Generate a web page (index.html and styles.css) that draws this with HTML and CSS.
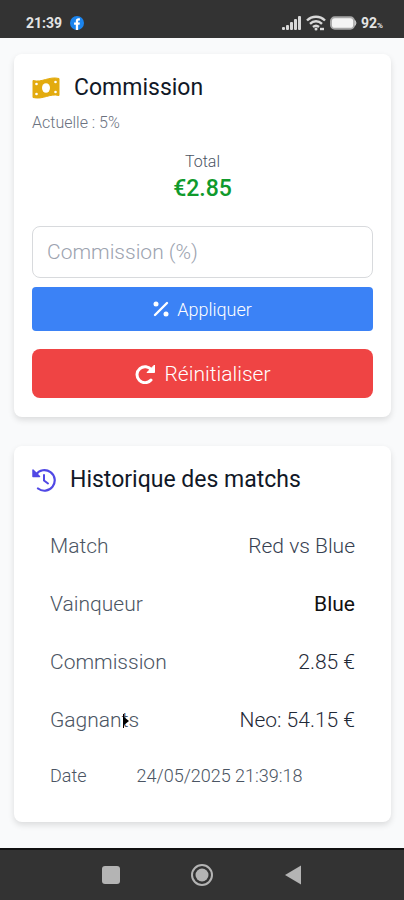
FILE: index.html
```html
<!DOCTYPE html>
<html lang="fr">

<head>
    <meta charset="UTF-8">
    <meta name="viewport" content="width=device-width, initial-scale=1.0">
    <title>Commission</title>
    <link rel="stylesheet" href="styles.css">
</head>

<body>
    <!-- Barre d'état -->
    <header class="status-bar">
        <div class="status-left">
            <span>21:39</span>
            <svg class="facebook" viewBox="0 0 24 24">
                <circle cx="12" cy="12" r="12" fill="#1b84ee" />
                <path d="M10 24v-9H7v-4h3V8.500C10 5.500 11.800 4 14.500 4H17v3.500h-1.600c-1.200 0-1.500.7-1.500 1.600V11H17l-.6 4h-2.500v9z" fill="#fff" />
            </svg>
        </div>
        <div class="status-right">
            <svg class="signal" viewBox="0 0 20 14" fill="#d8d8d8">
                <rect x="0" y="11" width="3" height="3" rx="1" />
                <rect x="4" y="9" width="3" height="5" rx="1" />
                <rect x="8" y="6" width="3" height="8" rx="1" />
                <rect x="12" y="3" width="3" height="11" rx="1" />
                <rect x="16" y="0" width="3" height="14" rx="1" />
            </svg>
            <svg class="wifi" viewBox="0 0 20 16" fill="none" stroke="#d8d8d8" stroke-width="2.400">
                <path d="M1 5.500C6 .5 14 .5 19 5.500" />
                <path d="M4 8.800c3.500-3.400 8.500-3.400 12 0" />
                <path d="M7 12c2-1.800 4-1.800 6 0" />
                <circle cx="10" cy="14" r="1.500" fill="#d8d8d8" stroke="none" />
                <path d="M14 14h4" />
            </svg>
            <svg class="battery" viewBox="0 0 28 14">
                <rect x="1" y="1" width="24" height="12" rx="4" fill="#f4f4f4" stroke="#a8a8a8" stroke-width="2" />
                <path d="M26 4.500q2 2.500 0 5z" fill="#c8c8c8" stroke="#c8c8c8" />
            </svg>
            <span>92<small>%</small></span>
        </div>
    </header>

    <main class="content">
        <!-- Commission -->
        <section class="card">
            <h2 class="card-title">
                <svg class="icon-money" viewBox="0 0 28 22">
                    <path d="M1 3.500C10 6 17-1 27 1.500V18.500C18 16 11 23 1 20.500Z" fill="#e3ab0e" stroke="#e3ab0e" stroke-linejoin="round" />
                    <ellipse cx="14" cy="11" rx="4" ry="4.800" fill="#fff" />
                    <g fill="#fff">
                        <circle cx="4.500" cy="7" r="1.300" />
                        <circle cx="4.500" cy="17" r="1.300" />
                        <circle cx="23.500" cy="5" r="1.300" />
                        <circle cx="23.500" cy="15" r="1.300" />
                    </g>
                </svg>
                Commission
            </h2>
            <p class="current">Actuelle : 5%</p>
            <div class="total">
                <p class="total-label">Total</p>
                <p class="total-value">€2.85</p>
            </div>
            <form class="commission-form">
                <input type="text" class="commission-input" aria-label="Commission (%)" placeholder="Commission (%)">
                <button type="button" class="btn btn-apply">
                    <svg class="icon-percent" viewBox="0 0 16 16">
                        <path d="M2 14 14 2" stroke="#fff" stroke-width="2.400" stroke-linecap="round" />
                        <circle cx="3" cy="3" r="2.500" fill="#fff" />
                        <circle cx="13" cy="13" r="2.500" fill="#fff" />
                    </svg>
                    Appliquer
                </button>
                <button type="button" class="btn btn-reset">
                    <svg class="icon-reset" viewBox="0 0 20 20">
                        <path d="M16.500 6A8 8 0 1 0 16 16" fill="none" stroke="#fff" stroke-width="3" stroke-linecap="round" />
                        <path d="M19.500 1v7.500H12z" fill="#fff" stroke="#fff" stroke-linejoin="round" />
                    </svg>
                    Réinitialiser
                </button>
            </form>
        </section>

        <!-- Historique -->
        <section class="card">
            <h2 class="card-title">
                <svg class="icon-history" viewBox="0 0 24 24" fill="none" stroke="#5048e5" stroke-width="2.200">
                    <path d="M4 6.500A10.300 10.300 0 1 1 6 20.500" stroke-linecap="round" />
                    <path d="M1 2v6.500h6.500z" fill="#5048e5" stroke-width="1.500" stroke-linejoin="round" />
                    <path d="M12 7v5.500l4 3" stroke-width="2" stroke-linecap="round" />
                </svg>
                Historique des matchs
            </h2>
            <table class="history">
                <tbody>
                    <tr>
                        <th scope="row">Match</th>
                        <td>Red vs Blue</td>
                    </tr>
                    <tr>
                        <th scope="row">Vainqueur</th>
                        <td class="winner">Blue</td>
                    </tr>
                    <tr>
                        <th scope="row">Commission</th>
                        <td class="amount">2.85 €</td>
                    </tr>
                    <tr>
                        <th scope="row">
                            <span class="gagnants">Gagnants
                                <svg class="pointer" viewBox="0 0 6 14"><path d="M0 0h1v3l5 4-5 4v3H0z" /></svg>
                            </span>
                        </th>
                        <td class="amount">Neo: 54.15 €</td>
                    </tr>
                    <tr class="date-row">
                        <th scope="row">Date</th>
                        <td>24/05/2025 21:39:18</td>
                    </tr>
                </tbody>
            </table>
        </section>
    </main>

    <!-- Barre de navigation -->
    <nav class="nav-bar">
        <button type="button" aria-label="Applications récentes">
            <svg viewBox="0 0 24 24"><rect x="3" y="3" width="18" height="18" rx="3" fill="#b4b4b4" /></svg>
        </button>
        <button type="button" aria-label="Accueil">
            <svg viewBox="0 0 24 24">
                <circle cx="12" cy="12" r="10" fill="none" stroke="#b4b4b4" stroke-width="2" />
                <circle cx="12" cy="12" r="6.500" fill="#b4b4b4" />
            </svg>
        </button>
        <button type="button" aria-label="Retour">
            <svg viewBox="0 0 24 24"><path d="M4 12 20 2.500v19z" fill="#b4b4b4" /></svg>
        </button>
    </nav>
</body>

</html>
```

FILE: styles.css
```css
/* Reset styling */
* {
    margin: 0;
    padding: 0;
    box-sizing: border-box;
    font-family: Roboto, "Noto Sans", sans-serif;
}

/* Body styling */
body {
    min-height: 100vh;
    display: flex;
    flex-direction: column;
    background-color: #f9fafb;
    color: #111827;
}

svg {
    flex: none;
}

/* Status bar */
.status-bar {
    display: flex;
    justify-content: space-between;
    height: 38px;
    padding: 8px 21px 0 26px;
    background-color: #333;
    color: #e4e4e4;
    font-size: 14px;
    font-weight: 700;
}

.status-left,
.status-right {
    display: flex;
    align-items: center;
}

.status-left {
    gap: 8px;
}

.status-right {
    gap: 4px;
}

.status-right small {
    font-size: 8px;
}

.facebook {
    width: 14px;
    height: 14px;
}

.signal {
    width: 20px;
    height: 14px;
}

.wifi {
    width: 20px;
    height: 16px;
}

.battery {
    width: 27px;
    height: 14px;
}

/* Cards */
.content {
    flex: 1;
    display: flex;
    flex-direction: column;
    gap: 29px;
    padding: 16px 13px 26px 14px;
}

.card {
    padding: 19px 18px;
    background-color: #fff;
    border-radius: 8px;
    box-shadow: 0 3px 6px rgba(0, 0, 0, 0.12);
}

.card-title {
    display: flex;
    align-items: center;
    gap: 14px;
    font-size: 23px;
    line-height: 30px;
    font-weight: 400;
}

.icon-money {
    width: 28px;
    height: 22px;
}

.icon-history {
    width: 24px;
    height: 24px;
}

/* Commission */
.current {
    margin-top: 8px;
    font-size: 16px;
    line-height: 24px;
    font-weight: 300;
    color: #6b7280;
}

.total {
    margin-top: 15px;
    text-align: center;
}

.total-label {
    font-size: 16px;
    line-height: 24px;
    font-weight: 300;
    color: #4b5563;
}

.total-value {
    font-size: 23px;
    line-height: 30px;
    font-weight: 500;
    color: #109a2c;
}

.commission-form {
    display: flex;
    flex-direction: column;
    margin-top: 22px;
}

.commission-input {
    width: 100%;
    height: 52px;
    padding: 0 14px;
    border: 1px solid #d8dadd;
    border-radius: 8px;
    font-size: 21px;
    font-weight: 300;
    color: #111827;
}

.commission-input::placeholder {
    color: #9ca3af;
}

.btn {
    display: flex;
    align-items: center;
    justify-content: center;
    border: none;
    color: #fff;
    font-weight: 300;
    cursor: pointer;
}

.btn-apply {
    height: 44px;
    margin-top: 9px;
    gap: 8px;
    background-color: #3b82f6;
    border-radius: 4px;
    font-size: 18px;
}

.btn-reset {
    height: 49px;
    margin-top: 18px;
    gap: 10px;
    background-color: #ef4444;
    border-radius: 8px;
    font-size: 21px;
}

.icon-percent {
    width: 16px;
    height: 16px;
}

.icon-reset {
    width: 20px;
    height: 20px;
}

/* History */
.history {
    display: block;
    margin-top: 22px;
    font-size: 21px;
    line-height: 58px;
}

.history tbody {
    display: block;
}

.history tr {
    display: flex;
    justify-content: space-between;
    padding: 0 18px;
}

.history th {
    font-weight: 300;
    color: #4b5563;
}

.history td {
    font-weight: 300;
    color: #374151;
}

.history .winner {
    font-weight: 400;
    color: #111;
}

.history .amount {
    color: #1f2937;
}

.history .date-row {
    justify-content: flex-start;
    gap: 50px;
    font-size: 18px;
    line-height: 54px;
}

.history .date-row td {
    color: #4b5563;
}

/* Marker over the label */
.gagnants {
    position: relative;
}

.pointer {
    position: absolute;
    right: 10px;
    top: 6px;
    width: 6px;
    height: 14px;
}

/* Navigation bar */
.nav-bar {
    display: flex;
    align-items: center;
    justify-content: center;
    gap: 67px;
    height: 52px;
    background-color: #333;
    border-top: 2px solid #111;
}

.nav-bar button {
    display: flex;
    background: none;
    border: none;
    cursor: pointer;
}

.nav-bar svg {
    width: 24px;
    height: 24px;
}
```
